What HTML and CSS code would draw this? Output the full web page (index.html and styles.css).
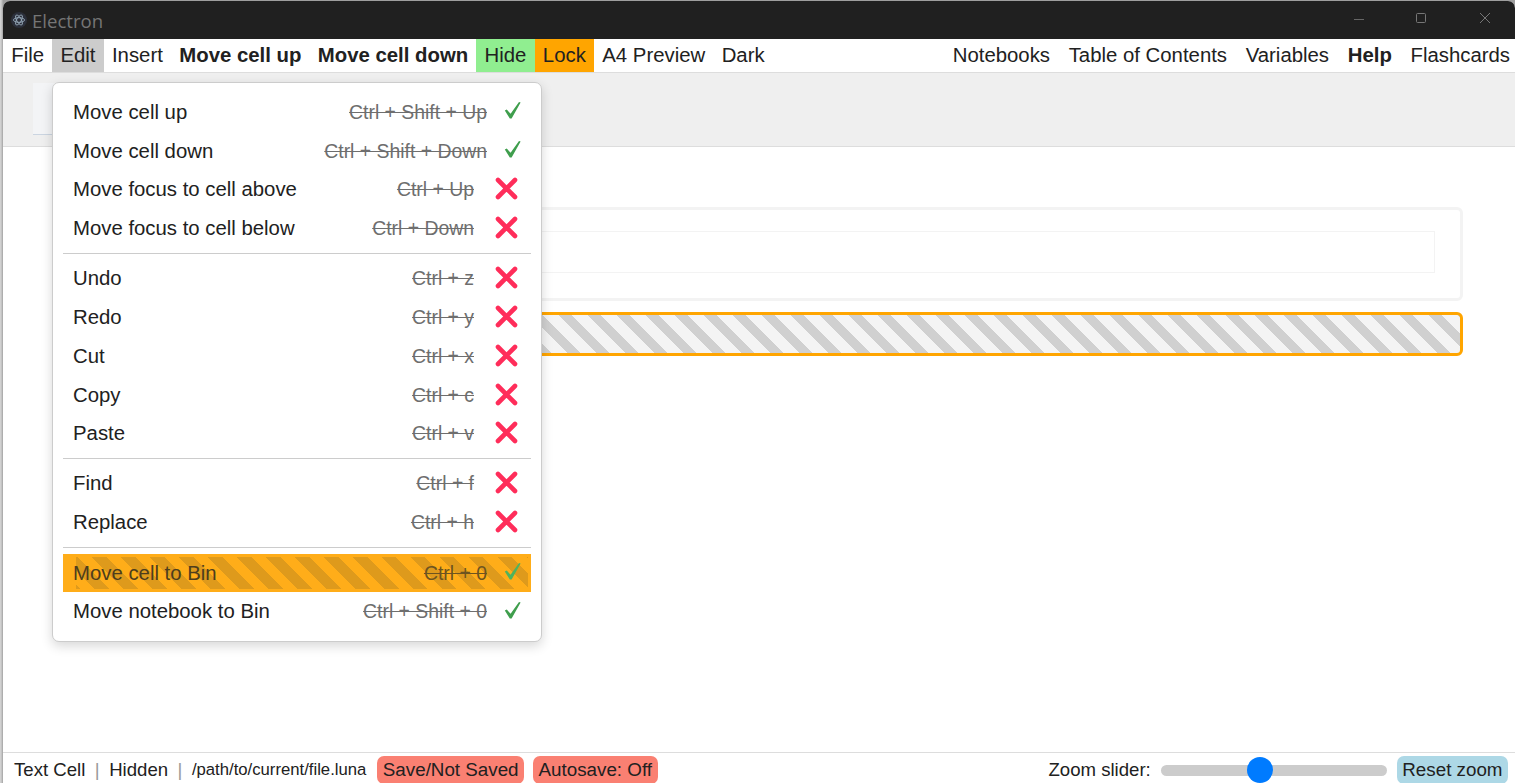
FILE: index.html
```html
<!DOCTYPE html>
<html lang="en">
<head>
<meta charset="utf-8">
<title>Electron</title>
<link rel="stylesheet" href="styles.css">
</head>
<body>
<div class="window">
  <header class="titlebar">
    <svg class="applogo" viewBox="0 0 16 16" width="16" height="16"><circle cx="8" cy="8" r="8" fill="#2b2f3a"/><g fill="none" stroke="#9fb4c4" stroke-width=".8"><ellipse cx="8" cy="8" rx="5.6" ry="2.3"/><ellipse cx="8" cy="8" rx="5.6" ry="2.3" transform="rotate(60 8 8)"/><ellipse cx="8" cy="8" rx="5.6" ry="2.3" transform="rotate(120 8 8)"/></g></svg>
    <span class="apptitle">Electron</span>
    <div class="winbtns">
      <svg class="winbtn winmin" viewBox="0 0 10 10" width="10" height="10"><path d="M0 5.5H10" stroke="#666" fill="none"/></svg>
      <svg class="winbtn" viewBox="0 0 10 10" width="10" height="10"><rect x=".5" y=".5" width="9" height="9" rx="1" stroke="#777" fill="none"/></svg>
      <svg class="winbtn" viewBox="0 0 10 10" width="10" height="10"><path d="M0 0L10 10M10 0L0 10" stroke="#777" fill="none"/></svg>
    </div>
  </header>
  <nav class="menubar">
    <div class="menu-left">
      <span class="mi">File</span>
      <span class="mi mi-active">Edit</span>
      <span class="mi">Insert</span>
      <span class="mi mi-bold">Move cell up</span>
      <span class="mi mi-bold">Move cell down</span>
      <span class="mi mi-hide">Hide</span>
      <span class="mi mi-lock">Lock</span>
      <span class="mi">A4 Preview</span>
      <span class="mi">Dark</span>
    </div>
    <div class="menu-right">
      <span class="mi">Notebooks</span>
      <span class="mi">Table of Contents</span>
      <span class="mi">Variables</span>
      <span class="mi mi-bold">Help</span>
      <span class="mi">Flashcards</span>
    </div>
  </nav>
  <div class="toolbar"><div class="toolbtn"></div></div>
  <main class="content">
    <section class="cell"><div class="cell-inner"></div></section>
    <section class="cell-hidden"></section>
  </main>
  <footer class="statusbar">
    <div class="status-left">
      <span>Text Cell</span><span class="sep">|</span><span>Hidden</span><span class="sep">|</span><span class="path">/path/to/current/file.luna</span>
      <span class="badge badge-red">Save/Not Saved</span>
      <span class="badge badge-red">Autosave: Off</span>
    </div>
    <div class="status-right">
      <span>Zoom slider:</span>
      <div class="slider"><div class="thumb"></div></div>
      <span class="badge badge-blue">Reset zoom</span>
    </div>
  </footer>
  <div class="dropdown">
    <div class="row"><span class="label">Move cell up</span><s class="keys">Ctrl + Shift + Up</s><svg class="ok" viewBox="0 0 17 20"><path d="M.8 9.6L2.8 8.6L6.6 12.8L15 1L16.6 1.6L7.6 17.6L5.8 17.6Z"/></svg></div>
    <div class="row"><span class="label">Move cell down</span><s class="keys">Ctrl + Shift + Down</s><svg class="ok" viewBox="0 0 17 20"><path d="M.8 9.6L2.8 8.6L6.6 12.8L15 1L16.6 1.6L7.6 17.6L5.8 17.6Z"/></svg></div>
    <div class="row"><span class="label">Move focus to cell above</span><s class="keys">Ctrl + Up</s><svg class="no" viewBox="0 0 23 23"><path d="M3 3L20 20M20 3L3 20"/></svg></div>
    <div class="row"><span class="label">Move focus to cell below</span><s class="keys">Ctrl + Down</s><svg class="no" viewBox="0 0 23 23"><path d="M3 3L20 20M20 3L3 20"/></svg></div>
    <hr class="divider">
    <div class="row"><span class="label">Undo</span><s class="keys">Ctrl + z</s><svg class="no" viewBox="0 0 23 23"><path d="M3 3L20 20M20 3L3 20"/></svg></div>
    <div class="row"><span class="label">Redo</span><s class="keys">Ctrl + y</s><svg class="no" viewBox="0 0 23 23"><path d="M3 3L20 20M20 3L3 20"/></svg></div>
    <div class="row"><span class="label">Cut</span><s class="keys">Ctrl + x</s><svg class="no" viewBox="0 0 23 23"><path d="M3 3L20 20M20 3L3 20"/></svg></div>
    <div class="row"><span class="label">Copy</span><s class="keys">Ctrl + c</s><svg class="no" viewBox="0 0 23 23"><path d="M3 3L20 20M20 3L3 20"/></svg></div>
    <div class="row"><span class="label">Paste</span><s class="keys">Ctrl + v</s><svg class="no" viewBox="0 0 23 23"><path d="M3 3L20 20M20 3L3 20"/></svg></div>
    <hr class="divider">
    <div class="row"><span class="label">Find</span><s class="keys">Ctrl + f</s><svg class="no" viewBox="0 0 23 23"><path d="M3 3L20 20M20 3L3 20"/></svg></div>
    <div class="row"><span class="label">Replace</span><s class="keys">Ctrl + h</s><svg class="no" viewBox="0 0 23 23"><path d="M3 3L20 20M20 3L3 20"/></svg></div>
    <hr class="divider divider-last">
    <div class="row row-bin"><span class="label">Move cell to Bin</span><s class="keys">Ctrl + 0</s><svg class="ok" viewBox="0 0 17 20"><path d="M.8 9.6L2.8 8.6L6.6 12.8L15 1L16.6 1.6L7.6 17.6L5.8 17.6Z"/></svg></div>
    <div class="row"><span class="label">Move notebook to Bin</span><s class="keys">Ctrl + Shift + 0</s><svg class="ok" viewBox="0 0 17 20"><path d="M.8 9.6L2.8 8.6L6.6 12.8L15 1L16.6 1.6L7.6 17.6L5.8 17.6Z"/></svg></div>
  </div>
</div>
</body>
</html>
```
FILE: styles.css
```css
* { box-sizing: border-box; }
html, body { margin: 0; height: 100%; overflow: hidden; background: #fff; }
body { padding: 1px 0 0 3px; background: linear-gradient(90deg, #d8d8d8, #bdbdbd 2px, #9e9e9e 3px); font-family: "Liberation Sans", Arial, sans-serif; font-size: 20.35px; color: #212121; }
.window { position: relative; height: 782px; display: flex; flex-direction: column; background: #fff; overflow: hidden; border-radius: 7px 7px 0 0; }
.titlebar { flex: 0 0 38px; display: flex; align-items: center; background: #202020; padding-left: 8px; }
.applogo { display: block; }
.apptitle { margin-left: 5px; font-family: "Open Sans", sans-serif; font-size: 18.6px; color: #757575; }
.winbtns { margin-left: auto; display: flex; gap: 54px; padding-right: 25px; }
.winbtn { display: block; margin-top: -4px; }
.winmin { margin-top: -3px; margin-right: -2px; }
.menubar { flex: 0 0 34px; display: flex; justify-content: space-between; background: #fff; border-bottom: 1px solid #ddd; }
.menu-left, .menu-right { display: flex; }
.menu-right { gap: 2.7px; margin-right: -3px; }
.mi { display: flex; align-items: center; height: 33px; padding: 0 8px; }
.menu-left .mi { padding: 0 8.22px; }
.mi-bold { font-weight: 700; }
.mi-active { background: #ccc; }
.mi-hide { background: #90ee90; }
.mi-lock { background: #ffa500; }
.toolbar { flex: 0 0 74px; background: #efefef; border-bottom: 1px solid #ddd; padding: 10px 0 0 30px; }
.toolbtn { width: 40px; height: 52px; background: #f3f4f6; border-bottom: 1px solid #cbd5e1; }
.content { flex: 1; display: flex; flex-direction: column; gap: 11px; padding: 60px 52px 0 60px; }
.cell { height: 94px; border: 3px solid #f3f3f3; border-radius: 6px; padding: 21px 25px 0 25px; }
.cell-inner { height: 42px; border: 1px solid #f3f3f3; }
.cell-hidden { height: 44px; border: 3px solid #ffa500; border-radius: 6px; background: repeating-linear-gradient(45deg, #f4f4f4 0 6px, #d0d0d0 6px 15.4px, #f4f4f4 15.4px 20.5px); }
.statusbar { flex: 0 0 31px; display: flex; justify-content: space-between; border-top: 1px solid #ddd; overflow: hidden; font-size: 18.6px; }
.status-left, .status-right { display: flex; align-items: center; white-space: nowrap; padding-top: 3px; }
.status-left { padding-left: 11px; }
.sep { margin: 0 9.5px; color: #999; }
.path { font-size: 16.7px; margin-right: 11px; }
.badge { padding: 0 5.5px; height: 28px; margin-top: 1px; display: flex; align-items: center; border-radius: 7px; margin-right: 9px; font-size: 18.8px; }
.badge-red { background: #fa8072; }
.badge-blue { background: #add8e6; margin-right: 7px; margin-left: 10px; }
.slider { position: relative; width: 226px; height: 11px; margin-left: 10px; margin-top: 2px; background: #ccc; border-radius: 6px; }
.thumb { position: absolute; left: 86px; top: -8px; width: 26px; height: 26px; border-radius: 50%; background: #007bff; }
.dropdown { position: absolute; left: 49px; top: 81px; width: 490px; background: #fff; border: 1px solid #ccc; border-radius: 7px; padding: 10px; box-shadow: 0 4px 12px rgba(0,0,0,.16); }
.row { display: flex; align-items: center; height: 38.75px; padding: 0 10px; }
.label { flex: 1; white-space: nowrap; }
.keys { color: #6e6e6e; white-space: nowrap; font-size: 19.4px; }
.ok { width: 17px; height: 20px; margin-left: 17px; margin-top: -2px; fill: #3f9e4d; flex: none; }
.no { width: 23px; height: 23px; margin: -1px 3px 1px 21px; fill: none; stroke: #ff2d5a; stroke-width: 4.6; stroke-linecap: round; flex: none; }
.divider { margin: 5.2px 0; border: 0; border-top: 1px solid #ccc; height: 0; }
.divider-last { margin-bottom: 6px; }
.row-bin { height: 38.2px; background-color: #ffad19; background-image: repeating-linear-gradient(45deg, #de9a1c 0 2.9px, #ffad19 2.9px 13.3px, #de9a1c 13.3px 20.5px); background-repeat: no-repeat; background-size: calc(100% - 16px) calc(100% - 6px); background-position: 13px 3px; color: #4d3d1d; }
.row-bin .keys { color: #6d5420; }
.row-bin .ok { fill: #4fb35e; }
```
